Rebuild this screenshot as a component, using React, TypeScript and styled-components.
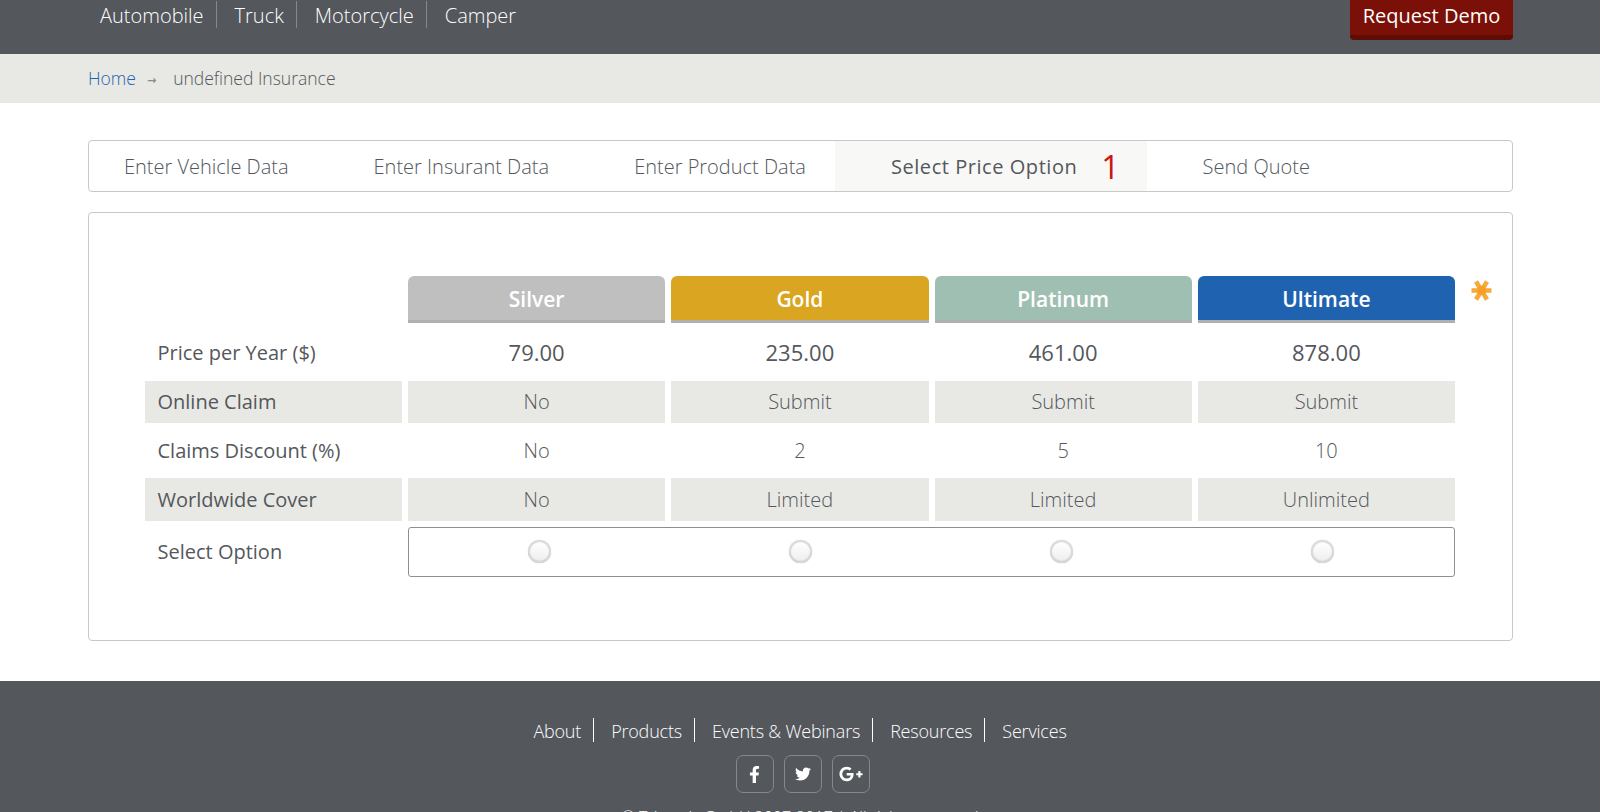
import React from 'react';
import styled, { createGlobalStyle } from 'styled-components';
import { FaFacebookF, FaTwitter, FaGooglePlusG } from 'react-icons/fa';

const GlobalStyle = createGlobalStyle`
  html, body {
    margin: 0;
    padding: 0;
    background: #fff;
    font-family: 'Open Sans', 'Liberation Sans', sans-serif;
    color: #54575c;
    overflow: hidden;
  }
`

const Page = styled.div`
  height: 812px;
  overflow: hidden;
`

const Header = styled.header`
  height: 54px;
  background: #54575c;
  padding: 0 87px 0 88px;
  display: flex;
  justify-content: space-between;
  align-items: flex-start;
`

const MainNav = styled.ul`
  list-style: none;
  margin: 1px 0 0;
  padding: 0;
  display: flex;
`

const MainNavItem = styled.li`
  height: 27px;
  line-height: 29px;
  padding: 0 12px 0 18px;
  font-size: 20px;
  font-weight: 300;
  color: #fff;
  border-right: 1px solid #85888c;

  &:first-child {
    padding-left: 12px;
  }

  &:last-child {
    border-right: none;
  }
`

const DemoButton = styled.button`
  width: 163px;
  height: 40px;
  background: #7b1008;
  border: none;
  border-bottom: 5px solid #5f0c05;
  border-radius: 0 0 4px 4px;
  color: #fff;
  font-family: inherit;
  font-size: 20px;
  padding: 0 0 5px;
`

const Crumbs = styled.nav`
  height: 49px;
  box-sizing: border-box;
  background: #e8e9e4;
  padding: 0 0 1px 88px;
  display: flex;
  align-items: center;
  font-size: 17.5px;
  font-weight: 300;
`

const HomeLink = styled.a`
  color: #1f63b0;
`

const CrumbArrow = styled.span`
  margin: 5px 17px 0 11px;
  font-size: 11px;
  font-weight: 700;
  color: #8a8c8e;
  font-family: 'DejaVu Sans', sans-serif;
`

const Main = styled.main`
  padding: 37px 87px 40px 88px;
`

const Tabs = styled.ul`
  list-style: none;
  margin: 0 0 20px;
  padding: 0;
  height: 50px;
  display: flex;
  border: 1px solid #c8c8c8;
  border-radius: 4px;
`

const Tab = styled.li<{ $active?: boolean }>`
  display: flex;
  align-items: center;
  padding: 0 ${p => (p.$active ? '27px' : '29px')} 0 56px;
  font-size: 20px;
  font-weight: ${p => (p.$active ? 400 : 300)};
  letter-spacing: ${p => (p.$active ? '0.55px' : '0')};
  background: ${p => (p.$active ? '#f8f8f6' : 'transparent')};

  &:first-child {
    padding-left: 35px;
  }
`

const Counter = styled.span`
  margin-left: 24px;
  font-size: 32px;
  letter-spacing: 0;
  color: #cc1511;
`

const Panel = styled.section`
  height: 429px;
  box-sizing: border-box;
  border: 1px solid #c8c8c8;
  border-radius: 4px;
  padding: 63px 0 0 56px;
  display: flex;
  align-items: flex-start;
`

const Matrix = styled.div`
  width: 1310px;
  display: grid;
  grid-template-columns: 257px repeat(4, 1fr);
  grid-template-rows: 47px 58px 42px 55px 43px;
  column-gap: 6px;
`

const PlanHead = styled.div<{ $color: string }>`
  background: ${p => p.$color};
  border-bottom: 3px solid #b0b0b0;
  border-radius: 6px 6px 0 0;
  padding-top: 1px;
  color: #fff;
  font-size: 21px;
  font-weight: 600;
  display: flex;
  align-items: center;
  justify-content: center;
`

const Label = styled.div<{ $shaded?: boolean }>`
  background: ${p => (p.$shaded ? '#e8e9e4' : 'transparent')};
  padding: 0 0 ${p => (p.$shaded ? '1px' : '0')} 12.5px;
  font-size: 20px;
  display: flex;
  align-items: center;
`

const Cell = styled.div<{ $shaded?: boolean; $strong?: boolean }>`
  background: ${p => (p.$shaded ? '#e8e9e4' : 'transparent')};
  padding-bottom: ${p => (p.$shaded ? '1px' : '0')};
  font-size: ${p => (p.$strong ? '22px' : '20px')};
  font-weight: ${p => (p.$strong ? 500 : 300)};
  display: flex;
  align-items: center;
  justify-content: center;
`

const SelectLabel = styled(Label)`
  margin-top: 6px;
  height: 48px;
`

const RadioBox = styled.div`
  grid-column: 2 / 6;
  margin-top: 6px;
  height: 50px;
  box-sizing: border-box;
  border: 1px solid #8f8f8f;
  border-radius: 3px;
  display: grid;
  grid-template-columns: repeat(4, 261px);
  padding: 0 0 2px 119px;
  align-items: center;
  justify-items: start;
`

const Radio = styled.span`
  width: 23px;
  height: 23px;
  border-radius: 50%;
  background: linear-gradient(#fdfdfd 20%, #ececec);
  box-shadow: inset 0 0 1px 2px #d8d8d8, inset 0 -2px 1px 0 #b8b8b8, 0 0 1px #c0c0c0;
`

const RequiredMark = styled.svg`
  flex: none;
  margin: 4px 0 0 16px;
`

const Footer = styled.footer`
  background: #54575c;
  height: 131px;
  padding-top: 37px;
  box-sizing: border-box;
  color: #fff;
  text-align: center;
`

const FooterNav = styled.ul`
  list-style: none;
  margin: 0;
  padding: 0;
  display: flex;
  justify-content: center;
`

const FooterItem = styled.li`
  height: 24px;
  line-height: 26px;
  padding: 0 12px 0 17px;
  font-size: 18px;
  font-weight: 300;
  letter-spacing: -0.2px;
  border-right: 1px solid #fff;

  &:last-child {
    padding-right: 17px;
    border-right: none;
  }
`

const Social = styled.div`
  display: flex;
  justify-content: center;
  gap: 10px;
  margin: 13px 0 0 5px;
`

const SocialIcon = styled.a<{ $size: number }>`
  width: 38px;
  height: 38px;
  box-sizing: border-box;
  border: 1px solid #85888c;
  border-radius: 7px;
  display: flex;
  align-items: center;
  justify-content: center;
  color: #fff;
  font-size: ${p => p.$size}px;
`

const Copyright = styled.p`
  margin: 13px 0 0;
  font-size: 16px;
  font-weight: 300;
`

const plans = [
  { name: 'Silver', color: '#bfbfbf', price: '79.00', claim: 'No', discount: 'No', cover: 'No' },
  { name: 'Gold', color: '#daa520', price: '235.00', claim: 'Submit', discount: '2', cover: 'Limited' },
  { name: 'Platinum', color: '#a0bfb3', price: '461.00', claim: 'Submit', discount: '5', cover: 'Limited' },
  { name: 'Ultimate', color: '#1f63b0', price: '878.00', claim: 'Submit', discount: '10', cover: 'Unlimited' },
];

function App() {
  return (
    <Page>
      <GlobalStyle />
      <Header>
        <MainNav>
          <MainNavItem>Automobile</MainNavItem>
          <MainNavItem>Truck</MainNavItem>
          <MainNavItem>Motorcycle</MainNavItem>
          <MainNavItem>Camper</MainNavItem>
        </MainNav>
        <DemoButton>Request Demo</DemoButton>
      </Header>

      <Crumbs>
        <HomeLink>Home</HomeLink>
        <CrumbArrow>→</CrumbArrow>
        <span>undefined Insurance</span>
      </Crumbs>

      <Main>
        <Tabs>
          <Tab>Enter Vehicle Data</Tab>
          <Tab>Enter Insurant Data</Tab>
          <Tab>Enter Product Data</Tab>
          <Tab $active>Select Price Option<Counter>1</Counter></Tab>
          <Tab>Send Quote</Tab>
        </Tabs>

        <Panel>
          <Matrix>
            <div />
            {plans.map(p => <PlanHead key={p.name} $color={p.color}>{p.name}</PlanHead>)}

            <Label>Price per Year ($)</Label>
            {plans.map(p => <Cell key={p.name} $strong>{p.price}</Cell>)}

            <Label $shaded>Online Claim</Label>
            {plans.map(p => <Cell key={p.name} $shaded>{p.claim}</Cell>)}

            <Label>Claims Discount (%)</Label>
            {plans.map(p => <Cell key={p.name}>{p.discount}</Cell>)}

            <Label $shaded>Worldwide Cover</Label>
            {plans.map(p => <Cell key={p.name} $shaded>{p.cover}</Cell>)}

            <SelectLabel>Select Option</SelectLabel>
            <RadioBox>
              {plans.map(p => <Radio key={p.name} />)}
            </RadioBox>
          </Matrix>
          <RequiredMark width="21" height="21" viewBox="0 0 21 21">
            <g stroke="#f7a93a" strokeWidth="4.6">
              <line x1="0.5" y1="10.5" x2="20.5" y2="10.5" />
              <line x1="5" y1="1.5" x2="16" y2="19.5" />
              <line x1="16" y1="1.5" x2="5" y2="19.5" />
            </g>
            <circle cx="10.5" cy="10.5" r="4.5" fill="#f59e2c" />
          </RequiredMark>
        </Panel>
      </Main>

      <Footer>
        <FooterNav>
          <FooterItem>About</FooterItem>
          <FooterItem>Products</FooterItem>
          <FooterItem>Events &amp; Webinars</FooterItem>
          <FooterItem>Resources</FooterItem>
          <FooterItem>Services</FooterItem>
        </FooterNav>
        <Social>
          <SocialIcon $size={17}><FaFacebookF /></SocialIcon>
          <SocialIcon $size={16}><FaTwitter /></SocialIcon>
          <SocialIcon $size={24}><FaGooglePlusG /></SocialIcon>
        </Social>
        <Copyright>© Tricentis GmbH 2007-2017 | All rights reserved</Copyright>
      </Footer>
    </Page>
  );
}

export default App;
